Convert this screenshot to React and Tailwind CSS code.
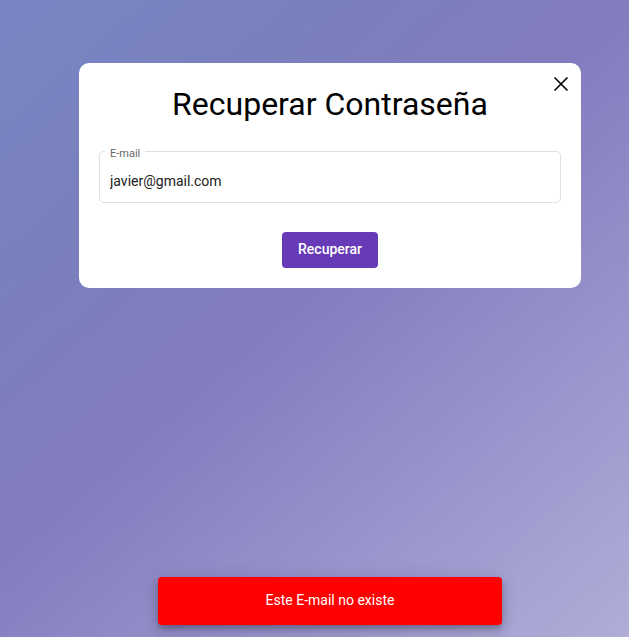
import React, { useState } from "react";

function CloseIcon() {
  return (
    <svg
      viewBox="0 0 24 24"
      className="size-6"
      fill="none"
      stroke="currentColor"
      strokeWidth="1.6"
      aria-hidden="true"
    >
      <path d="M5.5 5.5 18.5 18.5M18.5 5.5 5.5 18.5" />
    </svg>
  );
}

function EmailField() {
  const [email, setEmail] = useState("javier@gmail.com");
  return (
    <div className="relative">
      <input
        id="email"
        type="email"
        value={email}
        onChange={(event) => setEmail(event.target.value)}
        className="block h-[52px] w-full rounded-[5px] border border-[#e0e0e0] bg-white px-[10px] pt-2 text-sm text-[#212121] outline-none"
      />
      <label
        htmlFor="email"
        className="absolute -top-[5px] left-[6px] bg-white px-[5px] text-[11px] leading-4 text-[#666666]"
      >
        E-mail
      </label>
    </div>
  );
}

function RecoverDialog() {
  return (
    <section
      role="dialog"
      aria-labelledby="dialog-title"
      className="relative rounded-[10px] bg-white p-5"
    >
      <button type="button" aria-label="Cerrar" className="absolute top-[9px] right-2 text-black">
        <CloseIcon />
      </button>
      <h1 id="dialog-title" className="pt-px text-center text-[32px] leading-10 text-black">
        Recuperar Contraseña
      </h1>
      <form className="mt-[27px] flex flex-col" onSubmit={(event) => event.preventDefault()}>
        <EmailField />
        <button
          type="submit"
          className="mt-[29px] h-9 self-center rounded bg-[#673ab7] px-4 pb-[2px] text-sm font-medium text-white"
        >
          Recuperar
        </button>
      </form>
    </section>
  );
}

function Snackbar() {
  return (
    <div
      role="alert"
      className="w-full max-w-[344px] self-center rounded bg-[#ff0000] px-4 pt-[13px] pb-[15px] text-center text-sm text-white shadow-[0_3px_5px_-1px_rgba(0,0,0,0.2),0_6px_10px_0_rgba(0,0,0,0.14),0_1px_18px_0_rgba(0,0,0,0.12)]"
    >
      Este E-mail no existe
    </div>
  );
}

export default function App() {
  return (
    <main className="flex min-h-screen flex-col justify-between bg-[linear-gradient(139deg,#7986c3_0%,#7a7fbe_25%,#837cbf_47%,#b0add8_100%)] pt-[63px] pr-12 pb-3 pl-[79px] font-[Roboto,sans-serif]">
      <RecoverDialog />
      <Snackbar />
    </main>
  );
}
